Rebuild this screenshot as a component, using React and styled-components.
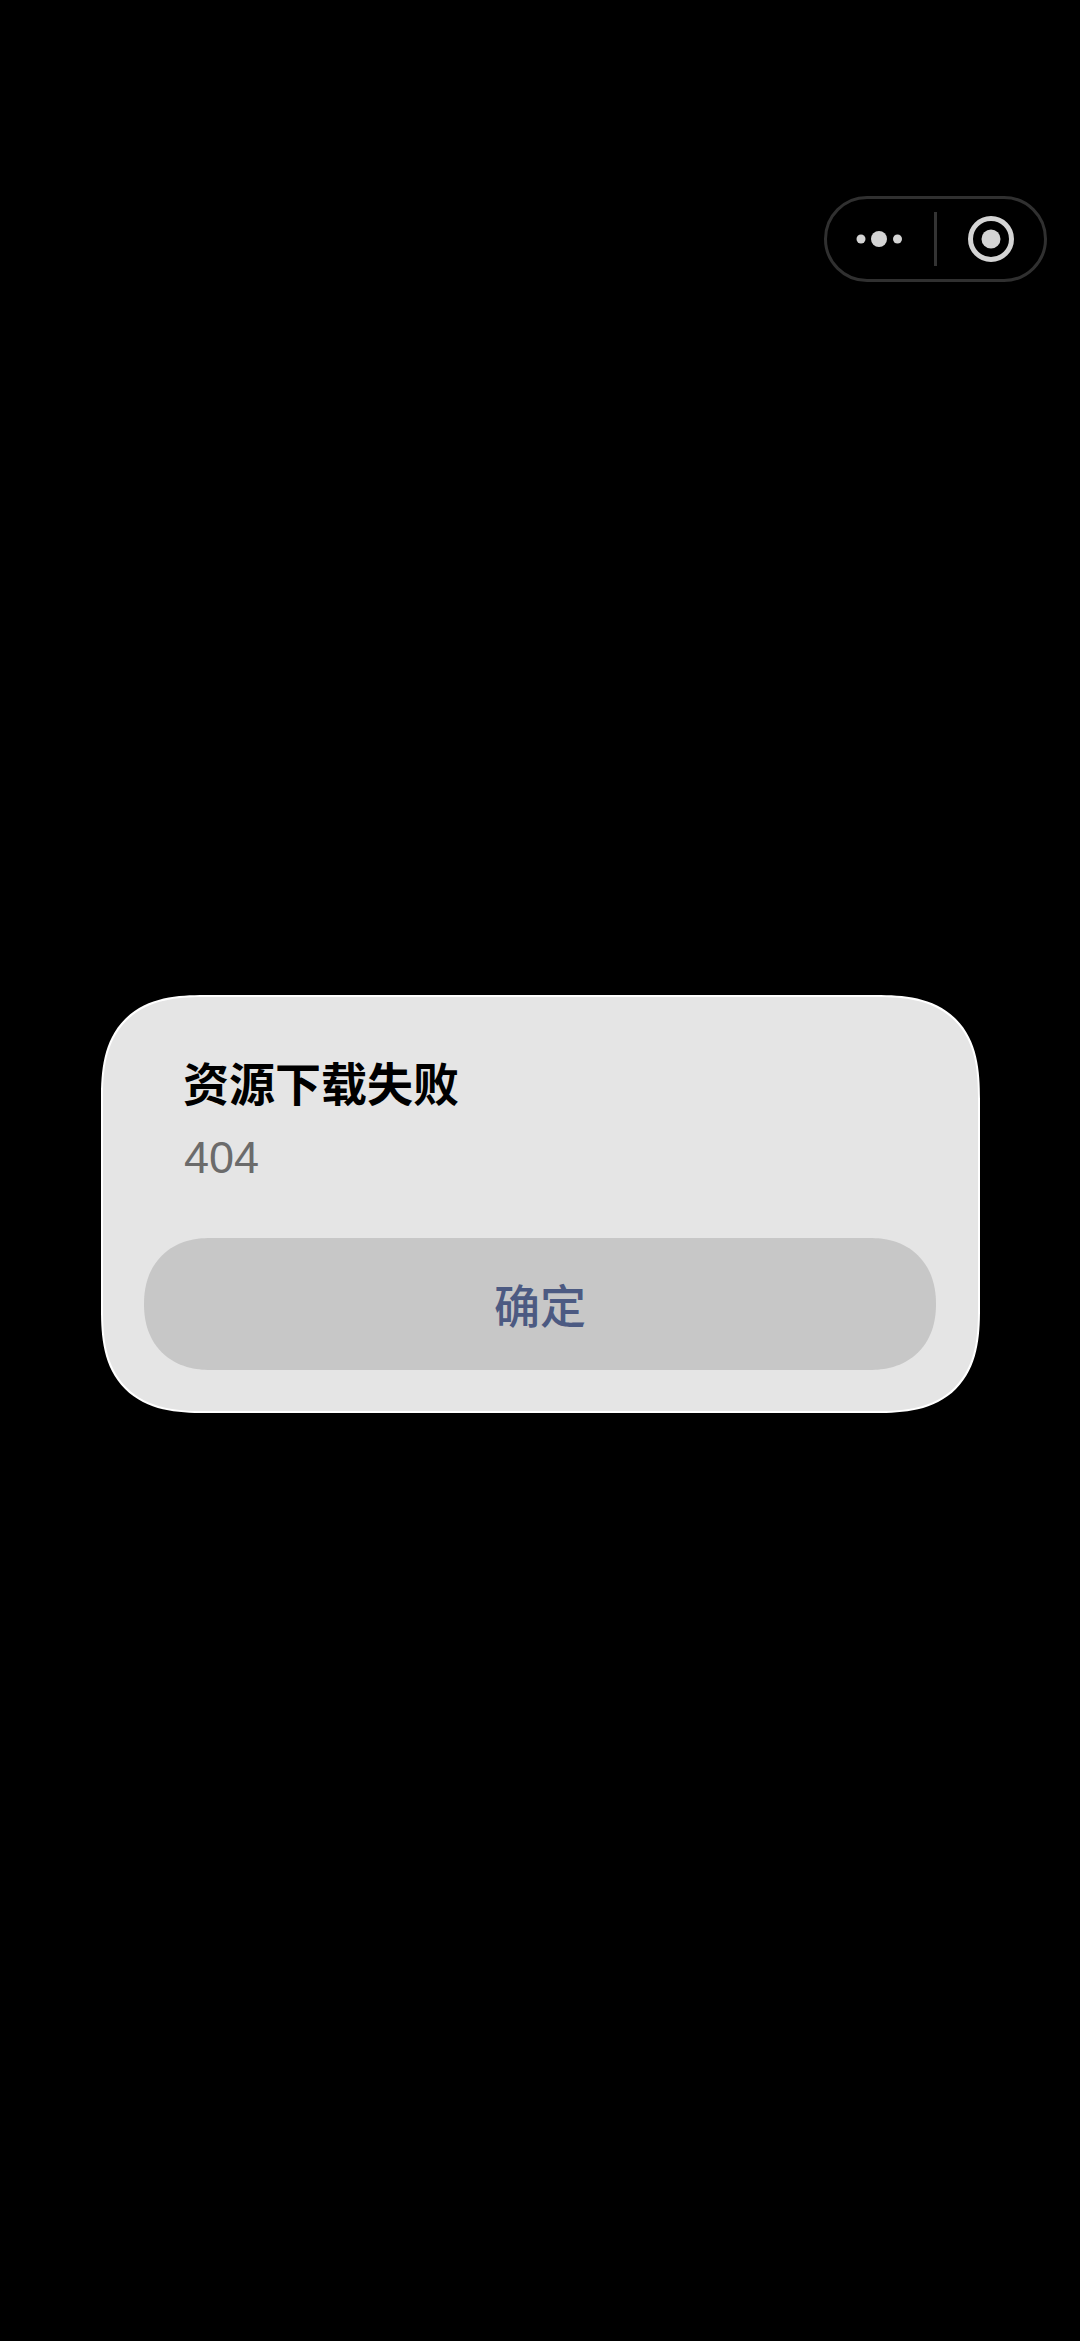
import React from 'react';
import styled, { createGlobalStyle } from 'styled-components';

const GlobalStyle = createGlobalStyle`
  html, body {
    margin: 0;
    background: #000;
  }
  * {
    box-sizing: border-box;
  }
`;

const Page = styled.div`
  width: 1080px;
  height: 2341px;
  background: #000;
  overflow: hidden;
  display: flex;
  flex-direction: column;
  font-family: "Liberation Sans", "Noto Sans CJK SC", sans-serif;
`;

const TopBar = styled.div`
  display: flex;
  justify-content: flex-end;
  padding: 196px 33px 0 0;
`;

const Capsule = styled.div`
  width: 223px;
  height: 86px;
  border: 3px solid #303030;
  border-radius: 43px;
  display: flex;
  align-items: center;
`;

const CapsuleSide = styled.div`
  flex: 1;
  display: flex;
  align-items: center;
  justify-content: center;
  padding: ${(p) => (p.$right ? '0 1px 0 3px' : '0 3px 0 0')};
`;

const Divider = styled.div`
  width: 3px;
  height: 54px;
  background: #333;
`;

const Dialog = styled.div`
  width: 879px;
  height: 418px;
  margin: 713px 0 0 101px;
  background: #e5e5e5;
  border: 2px solid #fff;
  border-radius: 104px;
  corner-shape: superellipse(1.4);
  padding: 59px 41px 0;
`;

const Title = styled.div`
  padding-left: 39px;
  font-size: 46px;
  line-height: 58px;
  font-weight: 700;
  color: #000;
`;

const Message = styled.div`
  padding-left: 40px;
  margin-top: 19px;
  font-size: 45px;
  line-height: 50px;
  color: #6b6b6b;
`;

const ConfirmButton = styled.button`
  display: block;
  width: 792px;
  height: 132px;
  margin-top: 55px;
  padding: 0 0 3px;
  border: none;
  border-radius: 66px;
  corner-shape: superellipse(1.15);
  background: #c7c7c7;
  color: #4c5a82;
  font-family: inherit;
  font-size: 46px;
  font-weight: 500;
`;

export default function App() {
  return (
    <Page>
      <GlobalStyle />
      <TopBar>
        <Capsule>
          <CapsuleSide>
            <svg width="54" height="20" viewBox="0 0 54 20">
              <circle cx="9" cy="10" r="4.5" fill="#d4d4d4" />
              <circle cx="27" cy="10" r="8" fill="#d4d4d4" />
              <circle cx="45.5" cy="10" r="4.5" fill="#d4d4d4" />
            </svg>
          </CapsuleSide>
          <Divider />
          <CapsuleSide $right>
            <svg width="48" height="48" viewBox="0 0 48 48">
              <circle cx="24" cy="24" r="20.5" fill="none" stroke="#d4d4d4" strokeWidth="5" />
              <circle cx="24" cy="24" r="9.5" fill="#d4d4d4" />
            </svg>
          </CapsuleSide>
        </Capsule>
      </TopBar>
      <Dialog>
        <Title>资源下载失败</Title>
        <Message>404</Message>
        <ConfirmButton>确定</ConfirmButton>
      </Dialog>
    </Page>
  );
}
